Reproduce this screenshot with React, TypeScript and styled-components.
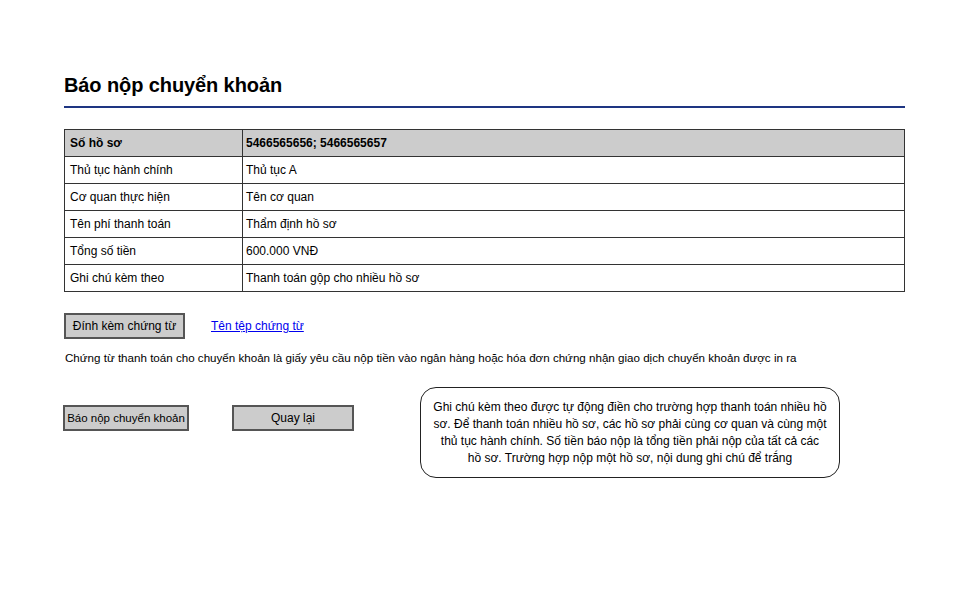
import React from "react";
import styled, { createGlobalStyle } from "styled-components";

const Global = createGlobalStyle`
  html, body { margin: 0; padding: 0; background: #fff; }
  body { font-family: "Liberation Sans", Arial, sans-serif; color: #000; }
`;

const Page = styled.div`
  width: 841px;
  padding: 72px 0 0 64px;
  display: flex;
  flex-direction: column;
`;

const Title = styled.h1`
  margin: 0;
  font-size: 20px;
  font-weight: bold;
  line-height: 26px;
  padding-bottom: 8px;
  border-bottom: 2px solid #1e3582;
  letter-spacing: -0.1px;
`;

const Table = styled.table`
  margin-top: 21px;
  width: 841px;
  border-collapse: collapse;
  font-size: 12px;
  table-layout: fixed;
`;

const Cell = styled.td<{ $head?: boolean; $first?: boolean }>`
  border: 1px solid #333;
  height: 26px;
  padding: 0 0 0 ${(p) => (p.$first ? 5 : 3)}px;
  background: ${(p) => (p.$head ? "#cccccc" : "#fff")};
  font-weight: ${(p) => (p.$head ? "bold" : "normal")};
  width: ${(p) => (p.$first ? "172px" : "auto")};
  vertical-align: middle;
`;

const AttachRow = styled.div`
  margin-top: 21px;
  display: flex;
  align-items: center;
  gap: 26px;
`;

const GreyButton = styled.button<{ $w: number; $fs?: number }>`
  width: ${(p) => p.$w}px;
  height: 26px;
  background: #cccccc;
  border: 2px solid #555;
  font-family: "Liberation Sans", Arial, sans-serif;
  font-size: ${(p) => p.$fs ?? 12}px;
  color: #000;
  padding: 0;
  white-space: nowrap;
  display: flex;
  align-items: center;
  justify-content: center;
`;

const FileLink = styled.a`
  color: #0000ee;
  text-decoration: underline;
  font-size: 12px;
`;

const Note = styled.p`
  margin: 12px 0 0 1px;
  font-size: 11.6px;
  line-height: 14px;
`;

const Bottom = styled.div`
  margin-top: 22px;
  display: flex;
  align-items: flex-start;
`;

const Buttons = styled.div`
  display: flex;
  gap: 43px;
  margin-top: 18px;
  margin-left: -1px;
`;

const Bubble = styled.div`
  box-sizing: border-box;
  margin-left: 66px;
  width: 420px;
  height: 91px;
  padding: 0 8px;
  border: 1.5px solid #222;
  border-radius: 16px;
  font-size: 12px;
  line-height: 17px;
  text-align: center;
  white-space: nowrap;
  display: flex;
  align-items: center;
  justify-content: center;
`;

const rows: [string, string][] = [
  ["Thủ tục hành chính", "Thủ tục A"],
  ["Cơ quan thực hiện", "Tên cơ quan"],
  ["Tên phí thanh toán", "Thẩm định hồ sơ"],
  ["Tổng số tiền", "600.000 VNĐ"],
  ["Ghi chú kèm theo", "Thanh toán gộp cho nhiều hồ sơ"],
];

export default function App() {
  return (
    <>
      <Global />
      <Page>
        <Title>Báo nộp chuyển khoản</Title>
        <Table>
          <tbody>
            <tr>
              <Cell $head $first>Số hồ sơ</Cell>
              <Cell $head>5466565656; 5466565657</Cell>
            </tr>
            {rows.map(([a, b]) => (
              <tr key={a}>
                <Cell $first>{a}</Cell>
                <Cell>{b}</Cell>
              </tr>
            ))}
          </tbody>
        </Table>
        <AttachRow>
          <GreyButton $w={121}>Đính kèm chứng từ</GreyButton>
          <FileLink href="#">Tên tệp chứng từ</FileLink>
        </AttachRow>
        <Note>
          Chứng từ thanh toán cho chuyển khoản là giấy yêu cầu nộp tiền vào ngân hàng hoặc hóa đơn chứng nhận giao dịch chuyển khoản được in ra
        </Note>
        <Bottom>
          <Buttons>
            <GreyButton $w={126} $fs={11.5}>Báo nộp chuyển khoản</GreyButton>
            <GreyButton $w={122}>Quay lại</GreyButton>
          </Buttons>
          <Bubble>
            <div>
              Ghi chú kèm theo được tự động điền cho trường hợp thanh toán nhiều hồ
              <br />
              sơ. Để thanh toán nhiều hồ sơ, các hồ sơ phải cùng cơ quan và cùng một
              <br />
              thủ tục hành chính. Số tiền báo nộp là tổng tiền phải nộp của tất cả các
              <br />
              hồ sơ. Trường hợp nộp một hồ sơ, nội dung ghi chú để trắng
            </div>
          </Bubble>
        </Bottom>
      </Page>
    </>
  );
}
